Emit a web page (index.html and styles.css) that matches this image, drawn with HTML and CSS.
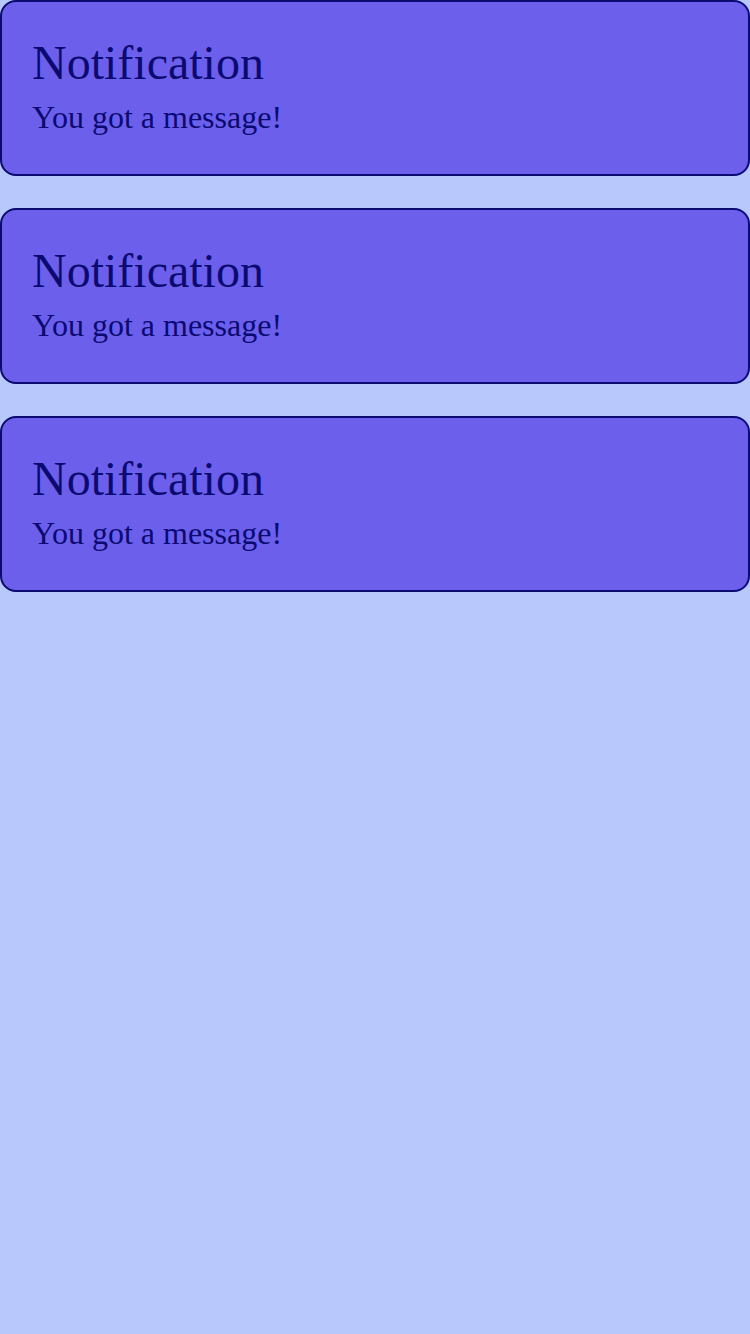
FILE: index.html
```html
<!DOCTYPE html>
<html lang="en">
<head>
<meta charset="utf-8">
<title>Notifications</title>
<link rel="stylesheet" href="styles.css">
</head>
<body>
<main class="list">
  <section class="card">
    <h1 class="title">Notification</h1>
    <p class="text">You got a message!</p>
  </section>
  <section class="card">
    <h1 class="title">Notification</h1>
    <p class="text">You got a message!</p>
  </section>
  <section class="card">
    <h1 class="title">Notification</h1>
    <p class="text">You got a message!</p>
  </section>
</main>
</body>
</html>
```
FILE: styles.css
```css
html, body {
  margin: 0;
  padding: 0;
}
body {
  background: #b8c8fc;
  min-height: 1334px;
  font-family: "Liberation Serif", "Times New Roman", serif;
  color: #0a0a72;
}
.list {
  display: flex;
  flex-direction: column;
  gap: 32px;
}
.card {
  background: #6c5fec;
  border: 2px solid #0a0a72;
  border-radius: 16px;
  padding: 33px 30px 37px;
}
.title {
  margin: 0;
  font-size: 48px;
  line-height: 56px;
  font-weight: normal;
}
.text {
  margin: 6px 0 0;
  font-size: 32px;
  line-height: 40px;
}
```
